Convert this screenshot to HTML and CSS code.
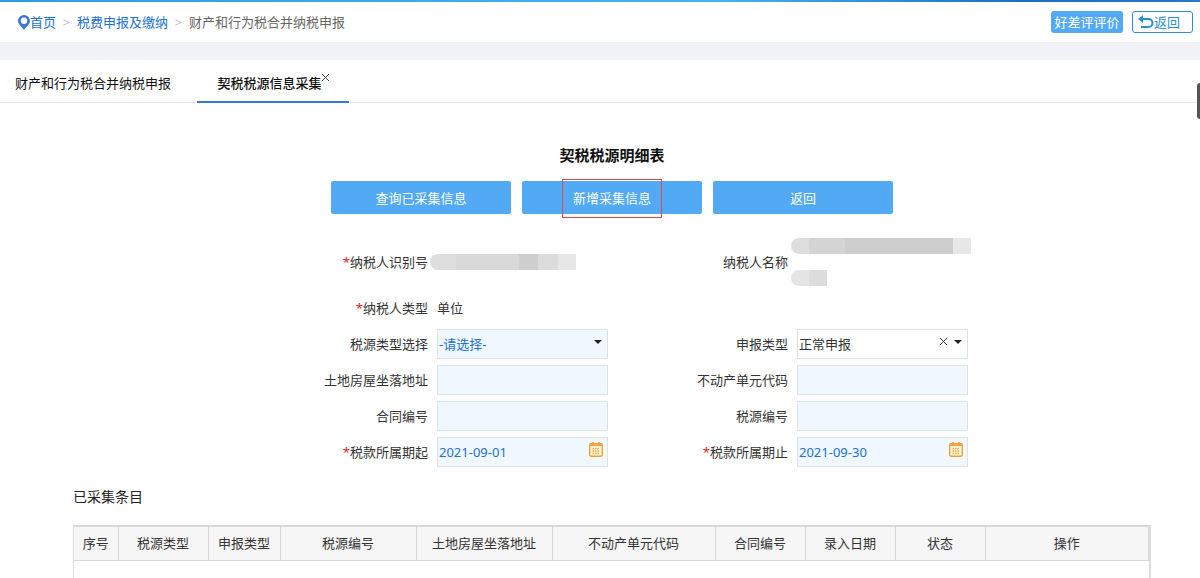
FILE: index.html
```html
<!DOCTYPE html>
<html lang="zh-CN">
<head>
<meta charset="utf-8">
<title>契税税源信息采集</title>
<link rel="stylesheet" href="styles.css">
</head>
<body>

<div class="strip"></div>
<header class="topbar">
  <nav class="crumbs">
    <svg class="pin" width="12" height="15" viewBox="0 0 12 15"><path fill="#3b78dc" fill-rule="evenodd" d="M6 0a6 6 0 0 1 6 6c0 3-3 5-6 9C3 11 0 9 0 6a6 6 0 0 1 6-6zm0 2.600a3.200 3.200 0 1 0 0 6.400a3.200 3.200 0 0 0 0-6.400z"/></svg>
    <a href="#">首页</a>
    <span class="sep">&gt;</span>
    <a href="#">税费申报及缴纳</a>
    <span class="sep">&gt;</span>
    <span>财产和行为税合并纳税申报</span>
  </nav>
  <div class="top-actions">
    <button class="rate">好差评评价</button>
    <button class="back"><svg width="16" height="14" viewBox="0 0 16 14" fill="none" stroke="#2b8fd0" stroke-width="2"><path d="M2 4h8.500a4 4 0 0 1 0 8H3"/><path fill="#2b8fd0" stroke="none" d="M0 4l5-4v8z"/></svg>返回</button>
  </div>
</header>

<div class="tabs">
  <a class="tab" href="#">财产和行为税合并纳税申报</a>
  <div class="tab active"><a href="#">契税税源信息采集</a><button class="tab-close" aria-label="关闭"><svg width="7" height="7" viewBox="0 0 7 7" stroke="#444"><path d="M0 0l7 7M7 0L0 7"/></svg></button></div>
</div>
<div class="side-handle"></div>

<main class="content">
  <h1>契税税源明细表</h1>
  <div class="buttons">
    <button>查询已采集信息</button>
    <button class="marked">新增采集信息</button>
    <button>返回</button>
  </div>

  <form class="form">
    <span class="label"><i>*</i>纳税人识别号</span>
    <div class="masked"><span class="mask mask-id"></span></div>
    <span class="label">纳税人名称</span>
    <div class="masked"><span class="mask mask-name"></span><span class="mask mask-short"></span></div>

    <span class="label"><i>*</i>纳税人类型</span>
    <div class="field wide">单位</div>

    <label class="label" for="source-type">税源类型选择</label>
    <div class="field">
      <select id="source-type"><option>-请选择-</option></select>
      <span class="arrow"></span>
    </div>
    <label class="label" for="report-type">申报类型</label>
    <div class="field">
      <select id="report-type" class="plain"><option>正常申报</option></select>
      <button type="button" class="clear" aria-label="清除"><svg width="7" height="7" viewBox="0 0 7 7" stroke="#333"><path d="M0 0l7 7M7 0L0 7"/></svg></button>
      <span class="arrow"></span>
    </div>

    <label class="label" for="address">土地房屋坐落地址</label>
    <div class="field"><input id="address" type="text"></div>
    <label class="label" for="unit-code">不动产单元代码</label>
    <div class="field"><input id="unit-code" type="text"></div>

    <label class="label" for="contract">合同编号</label>
    <div class="field"><input id="contract" type="text"></div>
    <label class="label" for="source-no">税源编号</label>
    <div class="field"><input id="source-no" type="text"></div>

    <label class="label" for="date-from"><i>*</i>税款所属期起</label>
    <div class="field">
      <input id="date-from" type="text" value="2021-09-01">
      <button type="button" class="calendar" aria-label="选择日期"><svg width="14" height="15" viewBox="0 0 14 15"><rect x="0.700" y="1.700" width="12.600" height="12.600" rx="1.500" fill="#fff6e0" stroke="#f0a030" stroke-width="1.400"/><path stroke="#f0a030" stroke-width="1.500" d="M1 3.200h12M4 0v3M10 0v3"/><path stroke="#f0a030" stroke-width="1.500" stroke-dasharray="1.500 1" d="M3.500 6.500h7M3.500 9h7M3.500 11.500h7"/></svg></button>
    </div>
    <label class="label" for="date-to"><i>*</i>税款所属期止</label>
    <div class="field">
      <input id="date-to" type="text" value="2021-09-30">
      <button type="button" class="calendar" aria-label="选择日期"><svg width="14" height="15" viewBox="0 0 14 15"><rect x="0.700" y="1.700" width="12.600" height="12.600" rx="1.500" fill="#fff6e0" stroke="#f0a030" stroke-width="1.400"/><path stroke="#f0a030" stroke-width="1.500" d="M1 3.200h12M4 0v3M10 0v3"/><path stroke="#f0a030" stroke-width="1.500" stroke-dasharray="1.500 1" d="M3.500 6.500h7M3.500 9h7M3.500 11.500h7"/></svg></button>
    </div>
  </form>

  <h2>已采集条目</h2>
  <div class="table-box">
    <table>
      <colgroup>
        <col class="w-xs"><col class="w-m"><col class="w-s"><col class="w-l"><col class="w-l">
        <col class="w-xl"><col class="w-m"><col class="w-m"><col class="w-m"><col>
      </colgroup>
      <thead>
        <tr>
          <th>序号</th>
          <th>税源类型</th>
          <th>申报类型</th>
          <th>税源编号</th>
          <th>土地房屋坐落地址</th>
          <th>不动产单元代码</th>
          <th>合同编号</th>
          <th>录入日期</th>
          <th>状态</th>
          <th>操作</th>
        </tr>
      </thead>
      <tbody></tbody>
    </table>
  </div>
</main>

</body>
</html>
```

FILE: styles.css
```css
* {
  box-sizing: border-box;
}

body {
  margin: 0;
  min-height: 100vh;
  display: flex;
  flex-direction: column;
  background: #fff;
  color: #333;
  font: 13px/18px "Noto Sans", "Noto Sans CJK SC", sans-serif;
}

a {
  color: inherit;
  text-decoration: none;
}

button, input, select {
  font: inherit;
  cursor: pointer;
}

.strip {
  height: 2px;
  background: linear-gradient(to right, #2a9fe0, #45b4ec 60%, #1c6fc0 85%, #2a78c8);
}

.topbar {
  display: flex;
  justify-content: space-between;
  align-items: center;
  height: 40px;
  padding: 0 7px 0 18px;
}

.crumbs {
  display: flex;
  align-items: center;
  color: #666;
}

.crumbs a {
  color: #1b72d0;
}

.sep {
  width: 21px;
  text-align: center;
  color: #bbb;
}

.top-actions {
  display: flex;
  gap: 9px;
}

.rate, .back {
  height: 22px;
  padding: 0;
  border-radius: 3px;
}

.rate {
  width: 72px;
  border: 0;
  background: #52a9f4;
  color: #fff;
}

.back {
  display: flex;
  align-items: center;
  width: 61px;
  padding-left: 5px;
  border: 1px solid #2b8fd0;
  background: #fff;
  color: #2b8fd0;
}

.tabs {
  display: flex;
  gap: 26px;
  height: 61px;
  padding-left: 15px;
  border-top: 18px solid #f1f2f6;
  border-bottom: 1px solid #e8e8ea;
  color: #111;
}

.tab {
  padding-top: 14px;
}

.tab.active {
  display: flex;
  justify-content: center;
  width: 152px;
  height: 43px;
  border-bottom: 2px solid #3a78d0;
  font-weight: 500;
}

.tab-close, .clear, .calendar {
  display: flex;
  padding: 0;
  border: 0;
  background: none;
}

.side-handle {
  position: fixed;
  top: 83px;
  right: 0;
  width: 3px;
  height: 36px;
  border-radius: 3px 0 0 3px;
  background: #555;
}

.content {
  flex: 1;
  display: flex;
  flex-direction: column;
  padding: 42px 49px 0 73px;
}

h1 {
  margin: 0;
  color: #111;
  font-size: 15px;
  line-height: 20px;
  text-align: center;
}

.buttons {
  display: flex;
  justify-content: center;
  gap: 11px;
  margin: 16px 0 20px;
}

.buttons button {
  position: relative;
  width: 180px;
  height: 33px;
  padding: 1px 0 0;
  border: 0;
  border-radius: 2px;
  background: #52a9f4;
  color: #fff;
}

.marked::after {
  content: "";
  position: absolute;
  inset: -2px 40px -4px;
  border: 1px solid #e04848;
}

.form {
  display: grid;
  grid-template-columns: 355fr 180fr 180fr 363fr;
  grid-template-rows: 56px;
  grid-auto-rows: 36px;
  align-items: center;
}

.label {
  text-align: right;
  white-space: nowrap;
}

.label i {
  color: #e02020;
  font-style: normal;
}

.field {
  position: relative;
  margin-left: 9px;
  max-width: 171px;
}

.field.wide {
  grid-column: span 3;
}

.field input, .field select {
  display: block;
  width: 100%;
  height: 30px;
  padding: 0 1px;
  border: 1px solid #dde2e8;
  border-radius: 0;
  background: #f0f7ff;
  color: #1b72d0;
  appearance: none;
}

.field select.plain {
  background: #fff;
  color: #333;
}

.arrow {
  position: absolute;
  top: 11px;
  right: 6px;
  border: 4px solid transparent;
  border-top-color: #222;
  border-bottom: 0;
  pointer-events: none;
}

.clear {
  position: absolute;
  top: 9px;
  right: 21px;
}

.calendar {
  position: absolute;
  top: 5px;
  right: 5px;
}

.masked {
  display: flex;
  flex-direction: column;
  gap: 16px;
}

.mask {
  height: 16px;
  border-radius: 8px 0 0 8px;
}

.mask-id {
  width: 146px;
  margin-left: 2px;
  background: linear-gradient(to right, #dedede 18%, #d9d9d9 18% 61%, #cfcfcf 61% 74%, #dcdcdc 74% 88%, #e7e7e7 88%);
}

.mask-name {
  width: 180px;
  margin-left: 3px;
  background: linear-gradient(to right, #dedede 10%, #d4d4d4 10% 30%, #cecece 30% 90%, #e7e7e7 90%);
}

.mask-short {
  width: 36px;
  margin-left: 3px;
  background: linear-gradient(to right, #e5e5e5 50%, #dcdcdc 50%);
}

h2 {
  margin: 17px 0 18px;
  color: #222;
  font-size: 14px;
  line-height: 20px;
  font-weight: normal;
}

.table-box {
  flex: 1;
  border: 1px solid #ddd;
  border-top: 2px solid #d8d8d8;
  border-right-width: 2px;
  border-bottom: 0;
}

table {
  width: 100%;
  table-layout: fixed;
  border-collapse: collapse;
}

th {
  height: 33px;
  padding: 0;
  border-right: 1px solid #d8d8d8;
  border-bottom: 1px solid #d8d8d8;
  background: #f6f6f6;
  font-weight: normal;
  white-space: nowrap;
}

.w-xs {
  width: 44px;
}

.w-s {
  width: 72px;
}

.w-m {
  width: 90px;
}

.w-l {
  width: 136px;
}

.w-xl {
  width: 163px;
}
```
